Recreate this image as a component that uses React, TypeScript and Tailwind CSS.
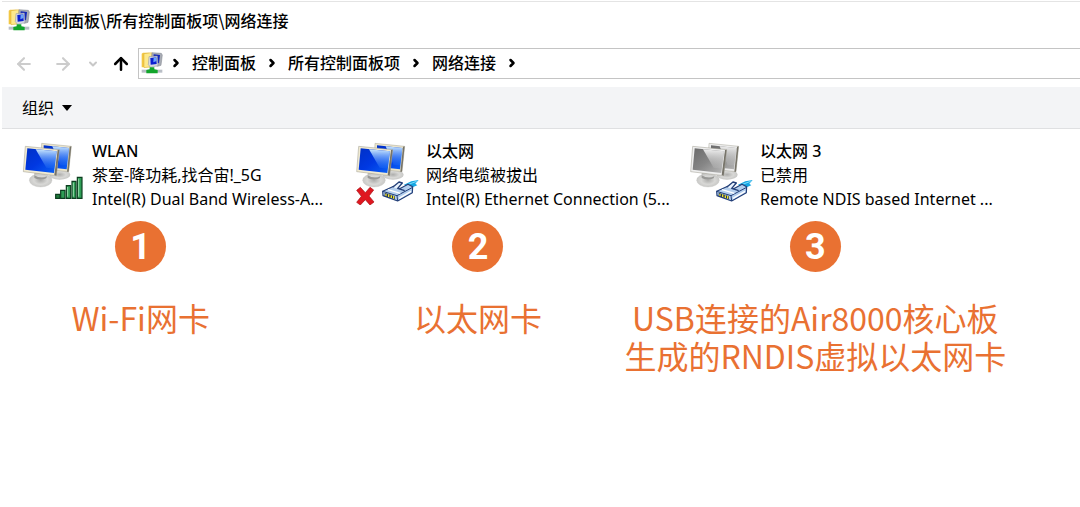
import { Fragment, type ReactNode } from 'react';
import { ArrowLeft, ArrowRight, ArrowUp, ChevronDown, ChevronRight } from 'lucide-react';

type Status = 'wifi' | 'unplugged' | 'disabled';

interface Adapter {
  name: string;
  state: string;
  device: string;
  status: Status;
}

const adapters: Adapter[] = [
  { name: 'WLAN', state: '茶室-降功耗,找合宙!_5G', device: 'Intel(R) Dual Band Wireless-A...', status: 'wifi' },
  { name: '以太网', state: '网络电缆被拔出', device: 'Intel(R) Ethernet Connection (5...', status: 'unplugged' },
  { name: '以太网 3', state: '已禁用', device: 'Remote NDIS based Internet ...', status: 'disabled' },
];

const notes = [
  ['Wi-Fi网卡'],
  ['以太网卡'],
  ['USB连接的Air8000核心板', '生成的RNDIS虚拟以太网卡'],
];

const crumbs = ['控制面板', '所有控制面板项', '网络连接'];

function FolderIcon() {
  return (
    <svg viewBox="0 0 66 66" className="size-[22px] shrink-0" aria-hidden="true">
      <path d="M2 5 L6 2 L26 2 L28 46 L2 46 Z" fill="#f2c744" />
      <path d="M9 5 L32 2 L32 44 L9 47 Z" fill="#fde98c" stroke="#dcae32" strokeWidth="1.5" />
      <path d="M33 2 L61 4 L64 9 L60 40 L50 43 L31 35 Z" fill="#a9adb5" stroke="#7f838c" strokeWidth="1.5" />
      <path d="M38 7 L57 9 L54 34 L37 31 Z" fill="#1226b8" />
      <path d="M24 14 L49 12 L51 41 L29 46 L22 38 Z" fill="#d6dae2" stroke="#8a8f9c" strokeWidth="1.5" />
      <path d="M28 18 L46 16 L47 36 L29 38 Z" fill="#0b1fd0" />
      <path d="M38 17 L46 16 L47 27 L37 31 Z" fill="#6ba4f7" />
      <path d="M2 53 H64 V62 H2 Z" fill="#b9bec6" />
      <path d="M26 46 H40 V52 L50 54 V64 H16 V54 L26 52 Z" fill="#12a52b" />
    </svg>
  );
}

function Monitors({ disabled }: { disabled: boolean }) {
  const id = disabled ? 'grey' : 'blue';
  return (
    <>
      <defs>
        <linearGradient id={`screen-${id}`} x1="0" y1="0" x2="1" y2="1">
          <stop offset="0" stopColor={disabled ? '#6a6a6a' : '#0030c6'} />
          <stop offset="0.5" stopColor={disabled ? '#868686' : '#0038e2'} />
          <stop offset="1" stopColor={disabled ? '#b8b8b8' : '#0a62f6'} />
        </linearGradient>
        <linearGradient id={`glare-${id}`} x1="0" y1="0" x2="0" y2="1">
          <stop offset="0" stopColor={disabled ? '#f4f4f4' : '#d5f0ff'} stopOpacity="0.95" />
          <stop offset="1" stopColor={disabled ? '#d0d0d0' : '#3b8cff'} stopOpacity="0.15" />
        </linearGradient>
        <radialGradient id={`base-${id}`}>
          <stop offset="0" stopColor="#aeaeac" />
          <stop offset="0.6" stopColor="#d8d8d6" />
          <stop offset="1" stopColor="#c8c8c6" />
        </radialGradient>
      </defs>
      <ellipse cx="134" cy="122" rx="32" ry="15" fill={`url(#base-${id})`} />
      <path d="M80 28 L169 37 L161 113 L112 108 L78 68 Z" fill={disabled ? '#ededed' : '#ebe5cb'} stroke="#aaa89c" strokeWidth="1.5" />
      <path d="M86 34 L162 42 L155 106 L86 98 Z" fill={`url(#screen-${id})`} />
      <path d="M112 37 L162 42 L157 94 L136 94 Z" fill={`url(#glare-${id})`} />
      <path d="M164 38 L169 37 L161 113 L156 113 Z" fill="#777469" />
      <path d="M58 112 L90 116 L92 134 L58 132 Z" fill="#b9b9b7" />
      <ellipse cx="77" cy="139" rx="34" ry="20" fill={`url(#base-${id})`} stroke="#c4c4c2" strokeWidth="1" />
      <path d="M58 124 Q77 136 96 127 L94 133 Q75 141 58 132 Z" fill="#989896" />
      <path d="M31 37 L133 47 L124 125 L25 113 Z" fill={disabled ? '#efefef' : '#f0ead2'} stroke="#9c9a8e" strokeWidth="1.5" />
      <path d="M37 43 L125 52 L117 117 L31 107 Z" fill={`url(#screen-${id})`} />
      <path d="M62 46 L125 52 L119 104 L94 101 Z" fill={`url(#glare-${id})`} />
      <path d="M128 48 L133 47 L124 125 L118 123 Z" fill="#77746a" />
    </>
  );
}

function SignalBars() {
  return (
    <g fill="#2f9e56" stroke="#0c3d1f" strokeWidth="3.5">
      <path d="M122 193 V181 H135 V193 Z" fill="#1f7a3c" />
      <path d="M137 193 V169 H150 V193 Z" />
      <path d="M154 193 V155 H167 V193 Z" />
      <path d="M171 193 V142 H183 V193 Z" />
      <path d="M187 193 V130 H201 V193 Z" />
      <path d="M175 146 V188 M191 134 V188 M158 159 V188" stroke="#96dcab" strokeWidth="3" />
    </g>
  );
}

function Plug() {
  return (
    <g strokeLinejoin="round">
      <path d="M162 152 L184 142 L206 138 L196 149 L202 154 L181 163 Z" fill="#16a6e2" />
      <path d="M170 153 L200 142" stroke="#7fdcfb" strokeWidth="3" />
      <path d="M98 172 L131 157 L149 164 L174 151 L188 158 L187 176 L143 201 L99 185 Z" fill="#b4cfee" stroke="#233f78" strokeWidth="3.5" />
      <path d="M98 172 L141 185 L188 160" fill="none" stroke="#233f78" strokeWidth="3" />
      <path d="M141 185 L143 201" stroke="#233f78" strokeWidth="3" />
      <path d="M128 160 L147 144 L157 147 L143 163 L164 170" fill="#eaf4ff" stroke="#233f78" strokeWidth="4" />
      <path d="M114 167 L151 178 M147 193 L183 172" stroke="#fff" strokeWidth="4" />
      <path d="M104 176 L135 187 V196 L104 186 Z" fill="#26344d" />
      <path d="M108 179 V186 M116 181 V189 M124 184 V192 M131 186 V194" stroke="#ece331" strokeWidth="4" />
    </g>
  );
}

function AdapterIcon({ status }: { status: Status }) {
  return (
    <svg viewBox={status === 'wifi' ? '15 15 198 198' : '12 15 198 198'} className="size-[66px] shrink-0" aria-hidden="true">
      <g transform={status === 'wifi' ? undefined : 'translate(-5 0)'}>
        <Monitors disabled={status === 'disabled'} />
      </g>
      {status === 'wifi' ? <SignalBars /> : <Plug />}
      {status === 'unplugged' && (
        <path
          d="M20 169 L31 160 L46 176 L60 160 L71 168 L57 186 L72 204 L60 213 L46 197 L31 213 L20 205 L34 187 Z"
          fill="#df1720"
          stroke="#a80d12"
          strokeWidth="2"
        />
      )}
    </svg>
  );
}

function NavButton({ label, className, children }: { label: string; className: string; children: ReactNode }) {
  return (
    <button type="button" aria-label={label} className={className}>
      {children}
    </button>
  );
}

export default function App() {
  return (
    <div className="min-h-screen overflow-x-hidden bg-white pt-px font-['Noto_Sans','Noto_Sans_CJK_SC',sans-serif] text-base text-black">
      <header className="ml-0.5 border-t border-[#e4e4e4]">
        <div className="flex h-9 items-center gap-1.5 pl-1.5">
          <FolderIcon />
          <h1 className="font-['Noto_Sans_CJK_SC',sans-serif] font-medium whitespace-nowrap">
            控制面板\所有控制面板项\网络连接
          </h1>
        </div>

        <div className="flex items-center pt-2.5 pb-2">
          <div className="flex w-[136px] shrink-0 items-center pl-3">
            <NavButton label="后退" className="mr-[19px] text-[#cccccc]">
              <ArrowLeft size={20} strokeWidth={2.5} />
            </NavButton>
            <NavButton label="前进" className="mr-3.5 text-[#cccccc]">
              <ArrowRight size={20} strokeWidth={2.5} />
            </NavButton>
            <NavButton label="最近浏览的位置" className="mr-3 text-[#c8c8c8]">
              <ChevronDown size={12} strokeWidth={4} />
            </NavButton>
            <NavButton label="上移" className="text-black">
              <ArrowUp size={20} strokeWidth={3} />
            </NavButton>
          </div>
          <nav className="flex h-[31px] flex-1 items-center border border-r-0 border-[#c4c4c4] pb-0.5 pl-0.5 whitespace-nowrap">
            <FolderIcon />
            <ChevronRight size={12} strokeWidth={5} className="mr-2.5 ml-[7px] shrink-0" />
            {crumbs.map((crumb) => (
              <Fragment key={crumb}>
                <a href="#" className="font-medium">{crumb}</a>
                <ChevronRight size={12} strokeWidth={5} className="mx-2.5 shrink-0" />
              </Fragment>
            ))}
          </nav>
        </div>

        <div className="flex h-[42px] items-center border-b border-[#dfe0e2] bg-[#f3f4f6] pl-5">
          <button type="button" className="flex items-center gap-2">
            组织
            <svg viewBox="0 0 10 6" className="h-1.5 w-2.5" aria-hidden="true">
              <path d="M0 0 H10 L5 6 Z" fill="currentColor" />
            </svg>
          </button>
        </div>
      </header>

      <main>
        <ul className="grid grid-cols-3 pt-2.5 pr-[58px] pl-5">
          {adapters.map((adapter) => (
            <li key={adapter.name}>
              <button type="button" className="flex gap-1.5 text-left whitespace-nowrap">
                <AdapterIcon status={adapter.status} />
                <span className="flex flex-col leading-6">
                  <span className="font-medium">{adapter.name}</span>
                  <span>{adapter.state}</span>
                  <span>{adapter.device}</span>
                </span>
              </button>
            </li>
          ))}
        </ul>

        <ol className="mt-2.5 mr-24 -ml-7 grid grid-cols-3 text-[#e97132]">
          {notes.map((lines, index) => (
            <li key={lines[0]} className="flex flex-col items-center">
              <span className="flex size-[51px] items-center justify-center rounded-full bg-[#e97132] font-[Roboto] text-4xl font-bold text-white">
                {index + 1}
              </span>
              <p className="mt-[26px] text-center font-['Noto_Sans_CJK_SC',sans-serif] text-[32px] leading-[38px] whitespace-nowrap">
                {lines.map((line) => (
                  <span key={line} className="block">{line}</span>
                ))}
              </p>
            </li>
          ))}
        </ol>
      </main>
    </div>
  );
}
